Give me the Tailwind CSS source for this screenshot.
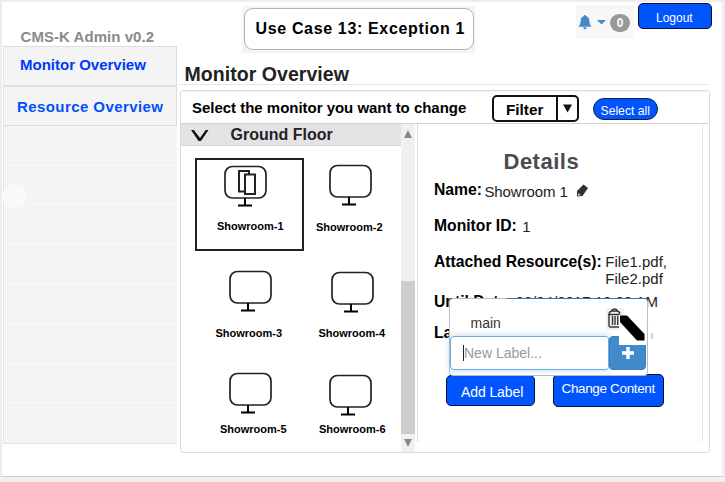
<!DOCTYPE html>
<html lang="en">
<head>
<meta charset="utf-8">
<title>CMS-K Admin</title>
<script src="https://cdn.jsdelivr.net/npm/@tailwindcss/browser@4"></script>
</head>
<body class="w-[725px] h-[482px] overflow-hidden bg-[#f0f0f0] font-['Liberation_Sans',Arial,sans-serif] text-black">
<svg class="hidden">
  <symbol id="screen" viewBox="0 0 44 34"><rect x="1" y="1.500" width="41" height="31.5" rx="7.5" fill="none" stroke="#222" stroke-width="1.7"/></symbol>
  <symbol id="stand" viewBox="0 0 14 9"><path d="M7 0V7M0 7.500H14" fill="none" stroke="#000" stroke-width="2"/></symbol>
</svg>
<div class="w-[725px] h-[477px] border-l-2 border-t-2 border-r-3 border-b border-l-[#ededed] border-t-[#ededed] border-r-[#ededed] border-b-[#d0d0d0] bg-white flex flex-col">
  <header class="flex h-[44px] shrink-0 items-start">
    <div class="w-[240px] pl-[18.500px] pt-[25px] text-[15px] leading-[20px] tracking-[0.05px] font-bold text-[#8a8a8a] whitespace-nowrap">CMS-K Admin v0.2</div>
    <div class="mt-[4px] w-[233px] h-[47px] bg-[#f4f4f5] p-[1.5px] pb-[3px] shrink-0">
      <div class="h-[42px] w-[230px] rounded-[9px] border-[1.5px] border-[#b3b3ba] bg-white pl-[11px] pt-[10px] text-[16px] leading-[20px] tracking-[0.65px] font-bold whitespace-nowrap">Use Case 13: Exception 1</div>
    </div>
    <div class="ml-[101px] mt-[3px] h-[34px] w-[57px] shrink-0 bg-[#f7f7f7] flex items-start pt-[9px]">
      <svg class="ml-[2px] mt-[1px]" width="14" height="15" viewBox="0 0 14 15"><path d="M7 0C6.3 0 6 .5 6 1.1C3.6 1.7 2.8 3.6 2.7 5.6C2.5 8.7 2 10 .5 11.8H13.5C12 10 11.5 8.7 11.3 5.6C11.2 3.6 10.4 1.7 8 1.1C8 .5 7.700 0 7 0ZM5.200 12.200C5.400 13.700 6 14.300 7 14.300S8.600 13.700 8.800 12.200Z" fill="#428bca"/></svg>
      <svg class="ml-[5px] mt-[6px]" width="9" height="5" viewBox="0 0 9 5"><path d="M0 0H9L4.500 4.500Z" fill="#428bca"/></svg>
      <div class="ml-[4px] h-[18px] w-[20px] rounded-[9px] bg-[#999] text-center text-[12px] leading-[18px] font-bold text-white">0</div>
    </div>
    <div class="ml-[4.500px] mt-[1px] h-[26px] w-[74px] shrink-0 rounded-[5px] border-[1.5px] border-[#06113a] bg-[#0055ff] pt-[4px] pl-[17.500px] text-[12px] leading-[20px] text-white">Logout</div>
  </header>

  <div class="flex">
    <nav class="ml-[1px] w-[174px] h-[398px] shrink-0 border-l border-b border-[#e4e4e4] bg-[#f4f4f4] flex flex-col relative">
      <a class="block h-[40px] border-t border-b border-r border-[#dedede] pl-[16px] pt-[8px] text-[15px] leading-[20px] font-bold text-[#0038ff]">Monitor Overview</a>
      <a class="block h-[40px] border-t border-b border-r border-[#dedede] pl-[13px] pt-[10px] text-[15px] leading-[20px] tracking-[0.42px] font-bold text-[#0050ff]">Resource Overview</a>
      <div class="flex-1 grid grid-rows-8 divide-y divide-[#fbfbfb]"><i></i><i></i><i></i><i></i><i></i><i></i><i></i><i></i></div>
      <span class="absolute left-[-1px] top-[138px] size-[24px] rounded-full bg-[#f9f9f9]"></span>
    </nav>

    <main class="ml-[2px] w-[531px]">
      <h1 class="h-[39px] ml-[-1px] border-b border-[#e8e8e8] pl-[6.500px] pt-[18px] text-[19.5px] leading-[20px] tracking-[0.05px] font-bold text-[#222]">Monitor Overview</h1>
      <section class="mt-[5px] ml-[1px] w-[530px] h-[363px] rounded-[3px] border border-[#dcdcdc] flex flex-col">
        <div class="h-[33px] shrink-0 border-t border-b border-t-[#f4f4f4] border-b-[#d4d4d8] flex items-start">
          <div class="w-[311px] pl-[11px] pt-[6px] text-[15px] leading-[20px] tracking-[-0.02px] font-bold whitespace-nowrap">Select the monitor you want to change</div>
          <div class="mt-[3px] h-[27px] w-[87px] shrink-0 rounded-[5px] border-2 border-[#111] bg-white flex">
            <div class="w-[62px] pl-[12px] pt-[3px] text-[15.3px] leading-[20px] font-bold">Filter</div>
            <div class="flex-1 border-l-2 border-[#111]"><svg class="ml-[5px] mt-[7px]" width="9" height="9" viewBox="0 0 10 9"><path d="M0 0H10L5 9Z" fill="#111"/></svg></div>
          </div>
          <div class="ml-[14px] mt-[6px] h-[22px] w-[65px] rounded-[11px] border-[1.5px] border-[#12204a] bg-[#0055ff] pl-[6.500px] pt-[2px] text-[12.2px] leading-[20px] text-white whitespace-nowrap">Select all</div>
        </div>
        <div class="flex flex-1">
          <div class="w-[220px] flex flex-col">
            <div class="h-[22px] border-b border-[#d8d8dc] bg-[#e3e3e6] flex">
              <svg class="ml-[9px] mt-[5px]" width="20" height="13" viewBox="0 0 20 13"><path d="M1 1H3.800L10 9L15.700 1H18.500L11 12H8.500Z" fill="#111"/></svg>
              <div class="ml-[20.500px] text-[16px] leading-[21px] font-bold text-[#222] whitespace-nowrap">Ground Floor</div>
            </div>
            <div class="grid grid-cols-[123px_97px] grid-rows-[105px_101px_100px] text-[11px] leading-[14px] font-bold">
              <div class="mt-[12px] ml-[14px] h-[93px] w-[109px] border-2 border-[#222]">
                <svg class="ml-[27px] mt-[5px]" width="44" height="44" viewBox="0 0 44 44">
                  <use href="#screen" width="44" height="34"/><use href="#stand" x="14" y="33" width="14" height="9"/>
                  <path d="M25 10V6H15V26.500H20M21 9.500H31V29H21Z" fill="none" stroke="#222" stroke-width="2"/>
                </svg>
                <div class="ml-[20px] mt-[10px]">Showroom-1</div>
              </div>
              <div>
                <svg class="ml-[25px] mt-[18px]" width="44" height="44" viewBox="0 0 44 44"><use href="#screen" width="44" height="34"/><use href="#stand" x="13" y="33" width="14" height="9"/></svg>
                <div class="ml-[12px] mt-[12px]">Showroom-2</div>
              </div>
              <div>
                <svg class="ml-[48px] mt-[19px]" width="44" height="44" viewBox="0 0 44 44"><use href="#screen" width="44" height="34"/><use href="#stand" x="12" y="33" width="14" height="9"/></svg>
                <div class="ml-[34.500px] mt-[12px]">Showroom-3</div>
              </div>
              <div>
                <svg class="ml-[27px] mt-[20px]" width="44" height="44" viewBox="0 0 44 44"><use href="#screen" width="44" height="34"/><use href="#stand" x="13" y="33" width="14" height="9"/></svg>
                <div class="ml-[14.500px] mt-[11px]">Showroom-4</div>
              </div>
              <div>
                <svg class="ml-[48px] mt-[20px]" width="44" height="44" viewBox="0 0 44 44"><use href="#screen" width="44" height="34"/><use href="#stand" x="12" y="33" width="14" height="9"/></svg>
                <div class="ml-[39px] mt-[6px]">Showroom-5</div>
              </div>
              <div>
                <svg class="ml-[25px] mt-[22px]" width="44" height="44" viewBox="0 0 44 44"><use href="#screen" width="44" height="34"/><use href="#stand" x="12" y="33" width="14" height="9"/></svg>
                <div class="ml-[15px] mt-[4px]">Showroom-6</div>
              </div>
            </div>
          </div>
          <div class="w-[14px] bg-[#f0f0f0] flex flex-col items-center">
            <svg class="mt-[6px]" width="8" height="8" viewBox="0 0 8 8"><path d="M0 8H8L4 0Z" fill="#888"/></svg>
            <div class="mt-[143px] h-[153px] w-[14px] bg-[#cdcdcd]"></div>
            <svg class="mt-[5px]" width="8" height="8" viewBox="0 0 8 8"><path d="M0 0H8L4 8Z" fill="#888"/></svg>
          </div>
          <div class="ml-[2px] h-[318px] w-[286px] border-l border-r border-b border-l-[#dcdcdc] border-r-[#e6e6e6] border-b-[#fafafa] relative pl-[16px]">
            <h2 class="pl-[69.500px] pt-[28px] text-[22px] leading-[20px] tracking-[0.5px] font-bold text-[#4c4c4c]">Details</h2>
            <div class="mt-[8px] flex h-[20px] text-[15px] leading-[20px] whitespace-nowrap"><b class="text-[15.7px]">Name:</b><span class="ml-[2.500px] pt-[2px] tracking-[-0.1px] text-[#222]">Showroom 1</span>
              <svg class="ml-[8.500px] mt-[4px]" width="13" height="14" viewBox="0 0 13 14"><path d="M1 7L7.500 .5L12 4L6.500 12L1 12.500Z" fill="#333"/><path d="M2 12L2.500 9L4.500 11Z" fill="#ddd"/></svg></div>
            <div class="mt-[16px] flex h-[20px] text-[15px] leading-[20px] whitespace-nowrap"><b class="text-[15.7px]">Monitor ID:</b><span class="ml-[5.500px] pt-[1px] text-[#222]">1</span></div>
            <div class="mt-[16px] flex h-[20px] text-[15px] leading-[17px] whitespace-nowrap"><b class="text-[15.7px] leading-[20px] tracking-[0.02px]">Attached Resource(s):</b><span class="ml-[3.500px] pt-[1px] text-[#222]">File1.pdf,<br>File2.pdf</span></div>
            <div class="mt-[20px] flex h-[20px] text-[15px] leading-[20px] whitespace-nowrap"><b class="text-[15.7px]">Until Date:</b><span class="ml-[3px] text-[#222]">06/24/2017 10:00 AM</span></div>
            <div class="mt-[11px] h-[20px] text-[15.7px] leading-[20px] font-bold">Labels:</div>
            <div class="mt-[31px] ml-[12px] flex items-start text-[14px] leading-[20px] text-white whitespace-nowrap">
              <div class="mt-[1px] h-[31px] w-[89px] rounded-[5px] border-[1.5px] border-[#06113a] bg-[#0055ff] pl-[14px] pt-[6px] tracking-[-0.1px]">Add Label</div>
              <div class="ml-[17.500px] h-[33px] w-[111px] rounded-[5px] border-[1.5px] border-[#06113a] bg-[#0055ff] pl-[8px] pt-[4px] text-[13.5px] tracking-[-0.35px]">Change Content</div>
            </div>

            <div class="absolute left-[31px] top-[174px] w-[199px] h-[78px] rounded-[4px] border border-[#bcbcbc] bg-white">
              <div class="absolute left-[57px] right-0 top-[-1px] h-px bg-[#3a78b0]"></div>
              <div class="pl-[20.500px] pt-[14px] h-[37px] text-[14px] leading-[20px] text-[#333]">main</div>
              <div class="flex h-[34px]">
                <div class="w-[159px] rounded-l-[4px] rounded-r-[3px] border border-[#66afe9] shadow-[0_0_6px_rgba(102,175,233,0.500)] pl-[12px] pt-[6px] flex text-[14px] leading-[20px] text-[#999]"><i class="-mt-px h-[16px] w-px translate-y-[3px] bg-[#222]"></i>New Label...</div>
                <div class="w-[37px] rounded-[4px] border border-[#357ebd] bg-[#428bca]"><svg class="ml-[12px] mt-[10px]" width="12" height="12" viewBox="0 0 12 12"><path d="M4.300 0H7.700V4.300H12V7.700H7.700V12H4.300V7.700H0V4.300H4.300Z" fill="#fff"/></svg></div>
              </div>
              <div class="absolute left-[156px] top-[9px] h-[22px] w-[18px] bg-[#f1f1f1]">
                <svg class="ml-[1px]" width="15" height="21" viewBox="0 0 15 21"><path d="M1 6.500H13M2 7V17.500Q2 19 3.500 19H11.500Q13 19 13 17.500V7M5.500 8V17M8 8V17M10.700 8V17M2 5.500Q2.500 3.500 5 3H10Q12.500 3.500 13 5.500M4.500 3Q5 1 7.500 1T10.500 3" fill="none" stroke="#333" stroke-width="1.400"/></svg>
              </div>
              <div class="absolute left-[185px] top-[22px] h-px w-[14px] bg-[#e4e4e4]"></div>
              <div class="absolute left-[169px] top-[16px] h-[30px] w-[27px] bg-white"><svg width="27" height="30" viewBox="0 0 27 30"><path d="M1 .5H8L25.500 19V25.500H18L1 7Z" fill="#000"/></svg></div>
            </div>
            <div class="absolute left-[233px] top-[209px] h-[6px] w-[2px] bg-[#ccc]"></div>
          </div>
        </div>
      </section>
    </main>
  </div>
</div>
</body>
</html>
